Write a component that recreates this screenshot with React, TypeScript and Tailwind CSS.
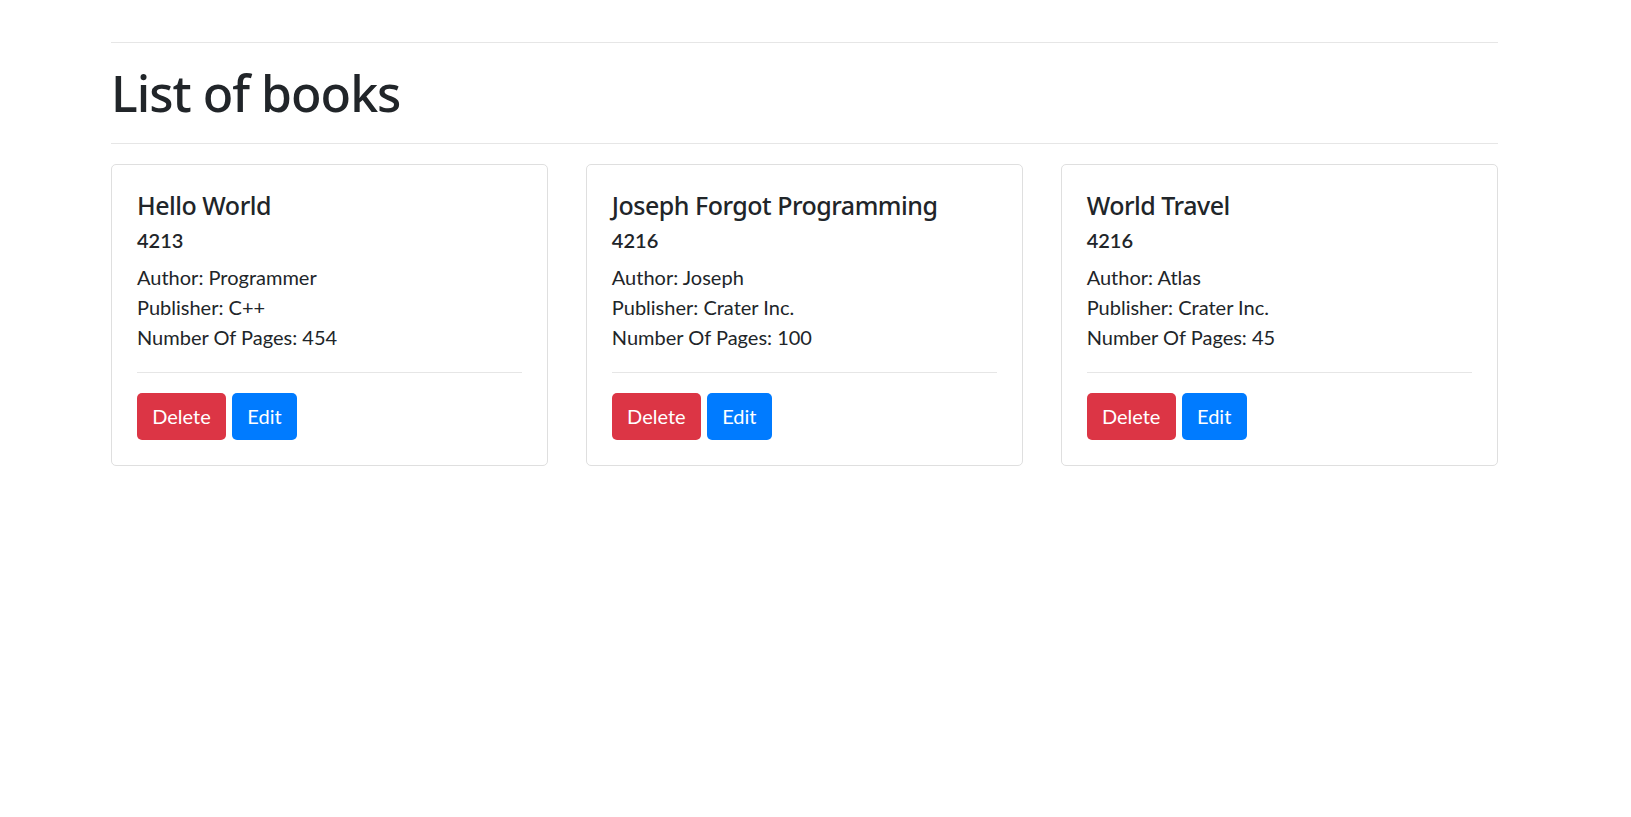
import React from "react";

type Book = {
  title: string;
  isbn: string;
  author: string;
  publisher: string;
  pages: number;
};

const books: Book[] = [
  { title: "Hello World", isbn: "4213", author: "Programmer", publisher: "C++", pages: 454 },
  { title: "Joseph Forgot Programming", isbn: "4216", author: "Joseph", publisher: "Crater Inc.", pages: 100 },
  { title: "World Travel", isbn: "4216", author: "Atlas", publisher: "Crater Inc.", pages: 45 },
];

function BookCard({ book }: { book: Book }) {
  return (
    <div className="rounded-[5px] border border-[#dfdfdf] bg-white">
      <div className="p-[25px]">
        <h5 className="mb-[15px] font-['Noto_Sans',sans-serif] text-[25px] font-medium leading-[30px] tracking-[-0.02em]">
          {book.title}
        </h5>
        <h6 className="mt-[-7.5px] mb-[10px] text-[20px] font-semibold leading-[24px]">{book.isbn}</h6>
        <p className="text-[20px] leading-[30px]">Author: {book.author}</p>
        <p className="text-[20px] leading-[30px]">Publisher: {book.publisher}</p>
        <p className="text-[20px] leading-[30px]">Number Of Pages: {book.pages}</p>
        <hr className="my-[20px] border-0 border-t border-[#e6e6e6]" />
        <div className="flex gap-[6px]">
          <button className="h-[47px] w-[89px] rounded-[5px] bg-[#dc3545] text-[20px] leading-[30px] text-white">
            Delete
          </button>
          <button className="h-[47px] w-[65px] rounded-[5px] bg-[#007bff] text-[20px] leading-[30px] text-white">
            Edit
          </button>
        </div>
      </div>
    </div>
  );
}

export default function App() {
  return (
    <div className="min-h-screen bg-white font-['Lato','Open_Sans',sans-serif] text-[#212529]">
      <div className="ml-[111px] w-[1387px] pt-[42px]">
        <hr className="border-0 border-t border-[#e6e6e6]" />
        <h1 className="mt-[20px] font-['Noto_Sans',sans-serif] text-[50px] font-medium leading-[60px] tracking-[-0.02em]">
          List of books
        </h1>
        <hr className="mt-[20px] border-0 border-t border-[#e6e6e6]" />
        <div className="mt-[20px] grid grid-cols-3 gap-[37.5px]">
          {books.map((b, i) => (
            <BookCard key={i} book={b} />
          ))}
        </div>
      </div>
    </div>
  );
}
